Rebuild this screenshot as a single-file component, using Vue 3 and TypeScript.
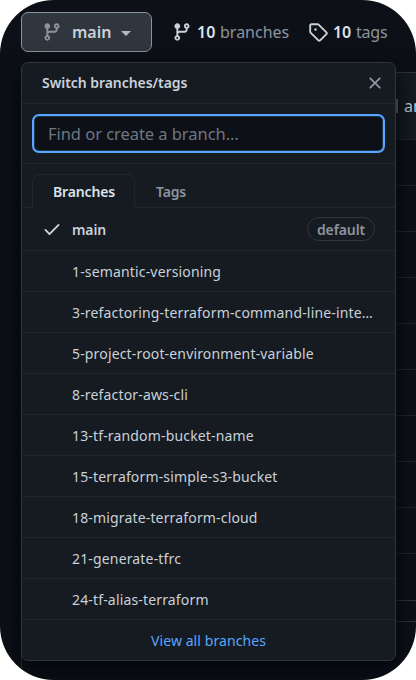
<script setup lang="ts">
import { ref } from 'vue'

type Tab = 'Branches' | 'Tags'

const tabs: Tab[] = ['Branches', 'Tags']
const activeTab = ref<Tab>('Branches')
const query = ref('')
const branches: string[] = [
  '1-semantic-versioning',
  '3-refactoring-terraform-command-line-interface',
  '5-project-root-environment-variable',
  '8-refactor-aws-cli',
  '13-tf-random-bucket-name',
  '15-terraform-simple-s3-bucket',
  '18-migrate-terraform-cloud',
  '21-generate-tfrc',
  '24-tf-alias-terraform',
]
const branchIcon =
  'M11.75 2.5a.75.75 0 1 0 0 1.5.75.75 0 0 0 0-1.5zm-2.25.75a2.25 2.25 0 1 1 3 2.122V6A2.5 2.5 0 0 1 10 8.5H6a1 1 0 0 0-1 1v1.128a2.251 2.251 0 1 1-1.5 0V5.372a2.25 2.25 0 1 1 1.5 0v1.836A2.492 2.492 0 0 1 6 7h4a1 1 0 0 0 1-1v-.628A2.25 2.25 0 0 1 9.5 3.25zM4.25 12a.75.75 0 1 0 0 1.5.75.75 0 0 0 0-1.5zM3.5 3.25a.75.75 0 1 1 1.5 0 .75.75 0 0 1-1.5 0z'
</script>

<template>
  <main class="page">
    <header class="toolbar">
      <button class="ref-button">
        <svg class="icon ref-icon" viewBox="0 0 16 16"><path :d="branchIcon" /></svg>
        <span class="ref-name">main</span>
        <span class="caret"></span>
      </button>
      <a class="stat stat-branches">
        <svg class="icon" viewBox="0 0 16 16"><path :d="branchIcon" /></svg>
        <strong>10</strong><span>branches</span>
      </a>
      <a class="stat stat-tags">
        <svg class="icon" viewBox="0 0 16 16">
          <path fill-rule="evenodd" d="M2.5 7.775V2.75a.25.25 0 0 1 .25-.25h5.025a.25.25 0 0 1 .177.073l6.25 6.25a.25.25 0 0 1 0 .354l-5.025 5.025a.25.25 0 0 1-.354 0l-6.25-6.25a.25.25 0 0 1-.073-.177zm-1.5 0V2.75C1 1.784 1.784 1 2.75 1h5.025c.464 0 .91.184 1.238.513l6.25 6.25a1.75 1.75 0 0 1 0 2.474l-5.026 5.026a1.75 1.75 0 0 1-2.474 0l-6.25-6.25A1.75 1.75 0 0 1 1 7.775zM6 5a1 1 0 1 0 0 2 1 1 0 0 0 0-2z" />
        </svg>
        <strong>10</strong><span>tags</span>
      </a>
    </header>

    <div class="content">
      <section class="files">
        <div class="commit"><i class="sliver"></i><span>and</span></div>
        <div v-for="n in 10" :key="n" class="file"></div>
      </section>
      <section class="readme"></section>
    </div>

    <div class="menu">
      <div class="menu-header">
        <span class="title">Switch branches/tags</span>
        <svg class="close" viewBox="0 0 16 16">
          <path d="M3.72 3.72a.75.75 0 0 1 1.06 0L8 6.94l3.22-3.22a.75.75 0 1 1 1.06 1.06L9.06 8l3.22 3.22a.75.75 0 1 1-1.06 1.06L8 9.06l-3.22 3.22a.75.75 0 0 1-1.06-1.06L6.94 8 3.72 4.78a.75.75 0 0 1 0-1.06z" />
        </svg>
      </div>
      <div class="filter">
        <input v-model="query" class="search" type="text" placeholder="Find or create a branch..." />
      </div>
      <nav class="tabs">
        <button
          v-for="tab in tabs"
          :key="tab"
          class="tab"
          :class="{ active: tab === activeTab }"
          @click="activeTab = tab"
        >{{ tab }}</button>
      </nav>
      <div class="row current">
        <svg class="check" viewBox="0 0 16 16">
          <path d="M13.78 4.22a.75.75 0 0 1 0 1.06l-7.25 7.25a.75.75 0 0 1-1.06 0L2.22 9.28a.75.75 0 0 1 1.06-1.06L6 10.94l6.72-6.72a.75.75 0 0 1 1.06 0z" />
        </svg>
        <span class="name">main</span>
        <span class="label"><span>default</span></span>
      </div>
      <div v-for="branch in branches" :key="branch" class="row">
        <span class="name">{{ branch }}</span>
      </div>
      <a class="footer">View all branches</a>
    </div>
  </main>
</template>

<style>
body {
  background: #fff;
}
</style>

<style scoped>
* {
  box-sizing: border-box;
}
.page {
  position: relative;
  width: 416px;
  height: 680px;
  overflow: hidden;
  border-radius: 54px;
  background: #0d1117;
  color: #c9d1d9;
  font-family: 'Noto Sans', 'Open Sans', sans-serif;
  font-size: 14px;
}
button {
  font: inherit;
}
svg {
  flex: none;
  fill: currentColor;
}
.icon {
  width: 20px;
  height: 20px;
}
.toolbar {
  display: flex;
  align-items: center;
  height: 72px;
  padding: 0 0 8px 21px;
}
.ref-button {
  display: flex;
  align-items: center;
  width: 131px;
  height: 40px;
  padding: 0 0 0 20px;
  border: 1px solid #8b949e;
  border-radius: 7px;
  background: #30363d;
  color: #c9d1d9;
}
.ref-icon {
  color: #8b949e;
}
.ref-name {
  width: 39px;
  margin-left: 10px;
  text-align: left;
  font-size: 16px;
  font-weight: 600;
}
.caret {
  margin: 3px 0 0 10px;
  border: 5px solid transparent;
  border-top-color: #b1bac4;
  border-bottom: 0;
}
.stat {
  display: flex;
  align-items: center;
  color: #8b949e;
  font-size: 16px;
}
.stat .icon {
  color: #c9d1d9;
}
.stat strong {
  width: 18px;
  margin: 0 5px 0 5px;
  color: #dce3ea;
  font-weight: 600;
}
.stat-branches {
  width: 116px;
  margin-left: 20px;
}
.stat-tags {
  margin-left: 20px;
  letter-spacing: -0.2px;
}
.files {
  height: 529px;
  margin-left: 21px;
  border-top: 1px solid #30363d;
  border-bottom: 1px solid #30363d;
}
.commit {
  display: flex;
  gap: 6px;
  align-items: center;
  height: 66px;
  padding-left: 375px;
  background: #161b22;
  font-size: 16px;
}
.sliver {
  flex: none;
  width: 2px;
  height: 14px;
  background: #68717b;
}
.file {
  height: 46px;
  border-top: 1px solid #21262d;
}
.readme {
  height: 80px;
  margin: 20px 0 0 21px;
  border-top: 1px solid #30363d;
  border-left: 1px solid #30363d;
}
/* Dropdown overlay */
.menu {
  position: absolute;
  top: 62px;
  left: 21px;
  width: 375px;
  height: 599px;
  border: 1px solid #30363d;
  border-radius: 7px;
  background: #161b22;
  box-shadow: 0 8px 24px #010409;
}
.menu-header {
  display: flex;
  align-items: center;
  justify-content: space-between;
  height: 41px;
  padding: 0 12px 0 20px;
  border-bottom: 1px solid #21262d;
  font-weight: 600;
  letter-spacing: -0.05px;
}
.title {
  padding-bottom: 2px;
}
.close {
  width: 20px;
  height: 20px;
  margin-right: -2px;
  color: #8b949e;
}
.filter {
  height: 60px;
  padding: 10px 10px;
  border-bottom: 1px solid #21262d;
}
.search {
  display: block;
  width: 353px;
  height: 39px;
  padding: 0 14px;
  border: 2px solid #58a6ff;
  border-radius: 7px;
  outline: 0;
  background: #0d1117;
  box-shadow: inset 0 0 0 1px rgba(88, 166, 255, 0.25);
  color: #c9d1d9;
  font: 16.5px 'Noto Sans', 'Open Sans', sans-serif;
  letter-spacing: -0.05px;
}
.search::placeholder {
  color: #6e7681;
  opacity: 1;
}
.tabs {
  display: flex;
  height: 44px;
  padding: 10px 10px 0;
  border-bottom: 1px solid #21262d;
}
.tab {
  height: 34px;
  padding: 0 20px;
  border: 1px solid transparent;
  border-bottom: 0;
  background: none;
  color: #8b949e;
  font-weight: 600;
  text-align: left;
  letter-spacing: -0.15px;
}
.tab.active {
  width: 103px;
  border-color: #21262d;
  border-radius: 7px 7px 0 0;
  background: #161b22;
  color: #dce3ea;
}
.row {
  display: flex;
  align-items: center;
  height: 41px;
  padding: 0 20px 0 50px;
  border-bottom: 1px solid #21262d;
  letter-spacing: 0.16px;
}
.name {
  flex: 1;
  overflow: hidden;
  white-space: nowrap;
  text-overflow: ellipsis;
}
.current {
  height: 43px;
  padding-left: 20px;
  font-weight: 600;
  letter-spacing: -0.1px;
}
.check {
  width: 20px;
  height: 20px;
  margin-right: 10px;
}
.label {
  display: flex;
  align-items: center;
  justify-content: center;
  width: 68px;
  height: 24px;
  border: 1px solid #30363d;
  border-radius: 12px;
  color: #8b949e;
}
.footer {
  display: flex;
  align-items: center;
  justify-content: center;
  height: 41px;
  color: #58a6ff;
  letter-spacing: 0.08px;
}
</style>
